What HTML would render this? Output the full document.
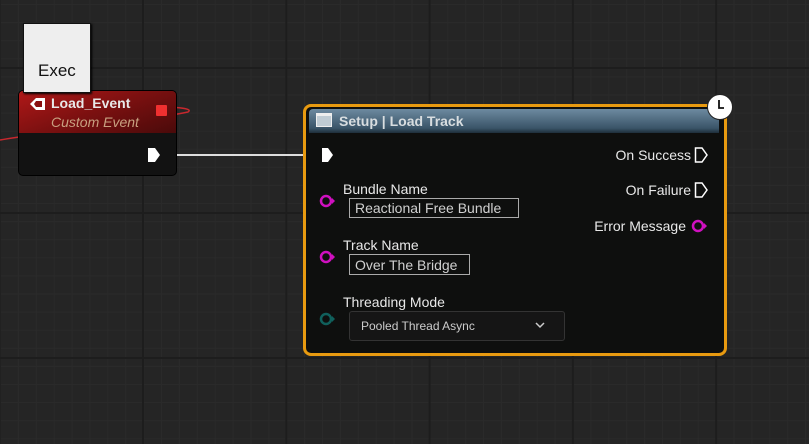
<!DOCTYPE html>
<html><head><style>
body{margin:0;width:809px;height:444px;overflow:hidden;background:#252525;font-family:"Liberation Sans",sans-serif;position:relative;
background-image:linear-gradient(90deg,#1d1d1d 2px,transparent 2px),linear-gradient(#1d1d1d 2px,transparent 2px),linear-gradient(90deg,#2a2a2a 1px,transparent 1px),linear-gradient(#2a2a2a 1px,transparent 1px);
background-size:143.3px 145px,143.3px 145px,17.9px 18.1px,17.9px 18.1px;background-position:142px 67px,142px 67px,0 4px,0 4px;}
.abs{position:absolute}
.t{color:#e8e8e8;font-size:14px}
</style></head><body>
<svg class="abs" style="left:0;top:0" width="809" height="444">
<path d="M0 140 C 60 130, 150 120, 188 112 C 195 108, 170 106, 150 108" stroke="#c8282e" stroke-width="1.5" fill="none"/>
<line x1="160" y1="155" x2="312" y2="155" stroke="#ddd" stroke-width="2"/>
</svg>
<div class="abs" style="left:18px;top:90px;width:157px;height:84px;background:#121212;border-radius:5px;border:1px solid #000;overflow:hidden">
<div style="height:42px;background:linear-gradient(160deg,#b01818 0%,#7a1010 50%,#4a0a0a 100%)"></div>
</div>
<svg class="abs" style="left:28px;top:96px" width="20" height="16"><path d="M2 8 L8 2 L17 2 L17 14 L8 14 Z" fill="#fff"/><path d="M8 5 L14 5 L14 11 L8 11 L6 8Z" fill="#8a1010"/></svg>
<div class="abs" style="left:51px;top:95px;font-weight:bold;font-size:14px;color:#e8e8e8">Load_Event</div>
<div class="abs" style="left:51px;top:114px;font-style:italic;font-size:14px;color:#c8a080">Custom Event</div>
<div class="abs" style="left:156px;top:105px;width:11px;height:11px;background:#f03030;border-radius:1px"></div>
<svg class="abs" style="left:147px;top:147px" width="14" height="16"><path d="M1 1 L8 1 L13 8 L8 15 L1 15 Z" fill="#fff"/></svg>
<div class="abs" style="left:23px;top:23px;width:66px;height:68px;background:#eee;border:1px solid #111;box-shadow:1px 1px 2px #000"></div>
<div class="abs" style="left:38px;top:61px;font-size:17px;color:#111">Exec</div>

<div class="abs" style="left:303px;top:104px;width:418px;height:246px;border:3px solid #e89a10;border-radius:8px;background:#0e0f0e"></div>
<div class="abs" style="left:309px;top:109px;width:410px;height:24px;background:linear-gradient(180deg,#6d8aa0,#3a5468 80%,#1e2e3a);border-radius:4px 4px 0 0"></div>
<div class="abs" style="left:316px;top:113px;width:16px;height:14px;background:#c0ccd4;border:1px solid #eee;box-sizing:border-box;border-top:3px solid #eee"></div>
<div class="abs" style="left:339px;top:113px;font-weight:bold;font-size:14px;color:#d8dde0">Setup | Load Track</div>
<div class="abs" style="left:707px;top:94px;width:24px;height:24px;border-radius:50%;background:#fff;border:1px solid #222"></div>
<svg class="abs" style="left:707px;top:94px" width="26" height="26"><path d="M12 6 V14 H17" stroke="#111" stroke-width="1.8" fill="none"/></svg>
<svg class="abs" style="left:320px;top:147px" width="16" height="16"><path d="M2 1 L8 1 L13 8 L8 15 L2 15 Z" fill="#fff"/></svg>
<div class="abs t" style="right:118px;top:147px">On Success</div>
<svg class="abs" style="left:694px;top:147px" width="16" height="16"><path d="M1.5 1 L8 1 L13 8 L8 15 L1.5 15 Z" fill="none" stroke="#fff" stroke-width="1.5"/></svg>
<div class="abs t" style="right:118px;top:182px">On Failure</div>
<svg class="abs" style="left:694px;top:182px" width="16" height="16"><path d="M1.5 1 L8 1 L13 8 L8 15 L1.5 15 Z" fill="none" stroke="#fff" stroke-width="1.5"/></svg>
<div class="abs t" style="right:123px;top:218px">Error Message</div>
<svg class="abs" style="left:691px;top:218px" width="18" height="16"><circle cx="7" cy="8" r="5" fill="none" stroke="#d010c0" stroke-width="2.5"/><path d="M13 5 L16 8 L13 11Z" fill="#d010c0"/></svg>

<svg class="abs" style="left:319px;top:193px" width="18" height="16"><circle cx="7" cy="8" r="5" fill="none" stroke="#d010c0" stroke-width="2.5"/><path d="M13 5 L16 8 L13 11Z" fill="#d010c0"/></svg>
<div class="abs t" style="left:343px;top:181px">Bundle Name</div>
<div class="abs" style="left:349px;top:198px;width:170px;height:20px;border:1px solid #aaa;box-sizing:border-box;color:#d0d0d0;font-size:14px;padding-left:5px;line-height:19px">Reactional Free Bundle</div>
<svg class="abs" style="left:319px;top:249px" width="18" height="16"><circle cx="7" cy="8" r="5" fill="none" stroke="#d010c0" stroke-width="2.5"/><path d="M13 5 L16 8 L13 11Z" fill="#d010c0"/></svg>
<div class="abs t" style="left:343px;top:237px">Track Name</div>
<div class="abs" style="left:349px;top:254px;width:121px;height:21px;border:1px solid #aaa;box-sizing:border-box;color:#d0d0d0;font-size:14px;padding-left:5px;line-height:20px">Over The Bridge</div>
<svg class="abs" style="left:319px;top:311px" width="18" height="16"><circle cx="7" cy="8" r="5" fill="none" stroke="#10605c" stroke-width="2.5"/><path d="M13 5 L16 8 L13 11Z" fill="#10605c"/></svg>
<div class="abs t" style="left:343px;top:294px">Threading Mode</div>
<div class="abs" style="left:349px;top:311px;width:216px;height:30px;border:1px solid #333;border-radius:3px;box-sizing:border-box;background:#151515;color:#ccc;font-size:12px;padding-left:11px;line-height:28px">Pooled Thread Async</div>
<svg class="abs" style="left:534px;top:320px" width="12" height="10"><path d="M2 3 L6 7 L10 3" stroke="#ccc" stroke-width="1.5" fill="none"/></svg>
</body></html>
